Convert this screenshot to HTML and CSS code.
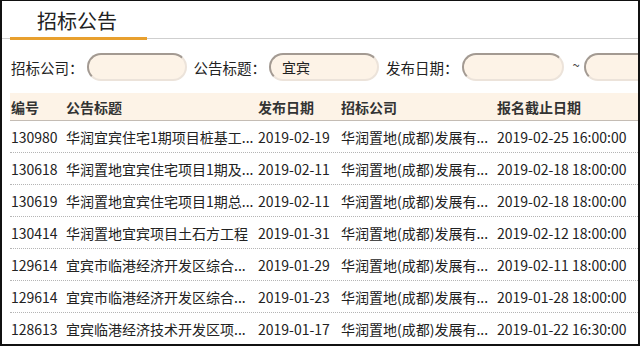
FILE: index.html
```html
<!DOCTYPE html>
<html lang="zh-CN">
<head>
<meta charset="utf-8">
<title>招标公告</title>
<link rel="stylesheet" href="styles.css">
</head>
<body>
<div class="frame">
  <div class="tabs">
    <div class="tab">招标公告</div>
  </div>
  <div class="filters">
    <label class="lbl">招标公司：</label>
    <div class="inp w100"></div>
    <label class="lbl">公告标题：</label>
    <div class="inp w110">宜宾</div>
    <label class="lbl">发布日期：</label>
    <div class="inp w102"></div>
    <span class="tilde">~</span>
    <div class="inp w100"></div>
  </div>
  <div class="table">
    <div class="row head">
      <div class="c1">编号</div><div class="c2">公告标题</div><div class="c3">发布日期</div><div class="c4">招标公司</div><div class="c5">报名截止日期</div>
    </div>
    <div class="row">
      <div class="c1">130980</div><div class="c2">华润宜宾住宅1期项目桩基工...</div><div class="c3">2019-02-19</div><div class="c4">华润置地(成都)发展有...</div><div class="c5">2019-02-25 16:00:00</div>
    </div>
    <div class="row">
      <div class="c1">130618</div><div class="c2">华润置地宜宾住宅项目1期及...</div><div class="c3">2019-02-11</div><div class="c4">华润置地(成都)发展有...</div><div class="c5">2019-02-18 18:00:00</div>
    </div>
    <div class="row">
      <div class="c1">130619</div><div class="c2">华润置地宜宾住宅项目1期总...</div><div class="c3">2019-02-11</div><div class="c4">华润置地(成都)发展有...</div><div class="c5">2019-02-18 18:00:00</div>
    </div>
    <div class="row">
      <div class="c1">130414</div><div class="c2">华润置地宜宾项目土石方工程</div><div class="c3">2019-01-31</div><div class="c4">华润置地(成都)发展有...</div><div class="c5">2019-02-12 18:00:00</div>
    </div>
    <div class="row">
      <div class="c1">129614</div><div class="c2">宜宾市临港经济开发区综合...</div><div class="c3">2019-01-29</div><div class="c4">华润置地(成都)发展有...</div><div class="c5">2019-02-11 18:00:00</div>
    </div>
    <div class="row">
      <div class="c1">129614</div><div class="c2">宜宾市临港经济开发区综合...</div><div class="c3">2019-01-23</div><div class="c4">华润置地(成都)发展有...</div><div class="c5">2019-01-28 18:00:00</div>
    </div>
    <div class="row">
      <div class="c1">128613</div><div class="c2">宜宾临港经济技术开发区项...</div><div class="c3">2019-01-17</div><div class="c4">华润置地(成都)发展有...</div><div class="c5">2019-01-22 16:30:00</div>
    </div>
  </div>
</div>
</body>
</html>
```
FILE: styles.css
```css
html, body {
  margin: 0;
  padding: 0;
  background: #fff;
}
.frame {
  box-sizing: border-box;
  width: 640px;
  height: 346px;
  border: 2px solid #111;
  border-top-width: 1px;
  overflow: hidden;
  font-family: "Noto Sans CJK SC", sans-serif;
  font-size: 14px;
  color: #222;
  background: #fff;
}
.tabs {
  height: 37px;
  border-bottom: 1px solid #cfcfcf;
  padding-left: 8px;
  display: flex;
  align-items: flex-end;
}
.tab {
  width: 137px;
  padding-left: 27px;
  height: 35px;
  line-height: 31px;
  font-size: 20px;
  color: #222;
  border-bottom: 3px solid #e8a02e;
  margin-bottom: -2px;
  box-sizing: border-box;
}
.filters {
  display: flex;
  align-items: center;
  height: 28px;
  margin-top: 14px;
  padding-left: 9px;
  white-space: nowrap;
}
.lbl {
  font-size: 14.5px;
  margin-right: 3px;
}
.inp {
  box-sizing: border-box;
  height: 28px;
  border-radius: 14px;
  background: #fdf3e7;
  border: 2px solid;
  border-color: #a39a92 #ece3da #ece3da #a39a92;
  padding-left: 11px;
  line-height: 24px;
  margin-right: 7px;
  flex: none;
}
.w100 { width: 100px; }
.w110 { width: 110px; }
.w102 { width: 102px; }
.tilde {
  margin: 0 4px 0 2px;
  font-size: 13px;
  line-height: 20px;
  padding-bottom: 4px;
  color: #444;
}
.table {
  margin-top: 12px;
  margin-left: 8px;
}
.row {
  display: flex;
  height: 31px;
  align-items: center;
  border-bottom: 1px dotted #b5b5b5;
  white-space: nowrap;
}
.row.head {
  height: 27px;
  background: #fdf3e7;
  font-weight: bold;
  border-bottom: 1px solid #c4bcb4;
  color: #333;
}
.row > div {
  overflow: hidden;
  flex: none;
}
.c1 { width: 55px; padding-left: 1px; }
.c2 { width: 192px; }
.c3 { width: 83px; }
.c4 { width: 156px; }
.c5 { width: 140px; }
```
